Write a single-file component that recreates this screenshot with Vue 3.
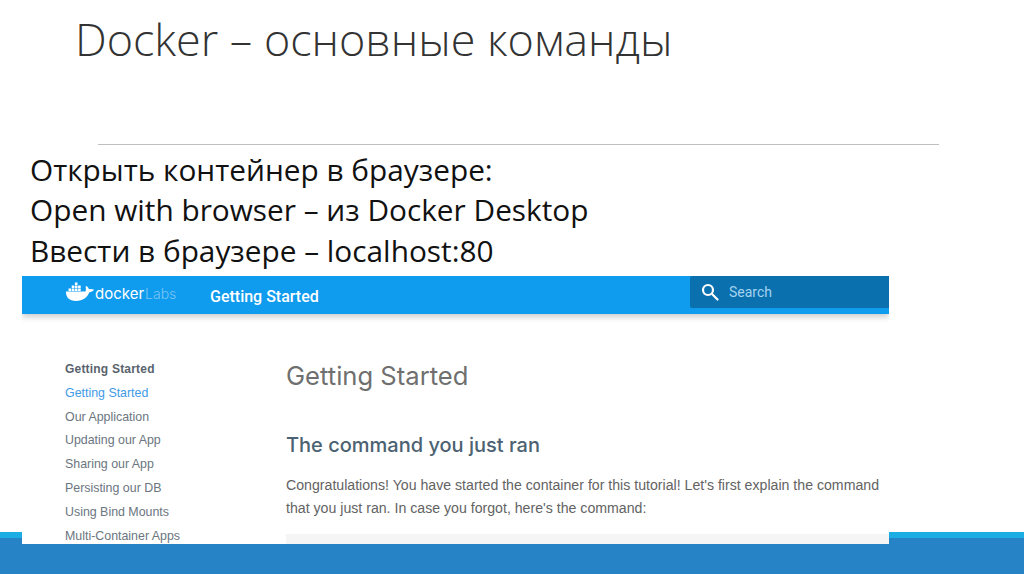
<template>
  <div class="slide">
    <h1 class="title">Docker – основные команды</h1>
    <div class="rule"></div>
    <div class="body">
      <p>Открыть контейнер в браузере:</p>
      <p>Open with browser – из Docker Desktop</p>
      <p>Ввести в браузере – localhost:80</p>
    </div>
    <div class="shot">
      <header class="bar">
        <div class="logo">
          <svg class="whale" width="30" height="20" viewBox="0 0 30 20">
            <path fill="#fff" d="M1 9.500h19.500c.6-2 .5-3.300 0-4.800l1-.700c1.400 1 2.100 2 2.500 3.300 1.500-.6 3-.5 5 .3-1 2-2.700 2.600-4.700 2.700C22.500 15.500 18 19 11 19 4.500 19 .8 15.500 1 9.500z"/>
            <path fill="#fff" d="M3.500 6.500h2.600v2.400H3.500zM6.700 6.500h2.600v2.400H6.700zM9.900 6.500h2.600v2.400H9.900zM13.100 6.500h2.600v2.400h-2.600zM6.700 3.500h2.600v2.400H6.700zM9.900 3.500h2.600v2.400H9.900zM13.100 3.500h2.600v2.400h-2.600zM9.900.5h2.600v2.400H9.900z"/>
          </svg>
          <span class="docker">docker</span><span class="labs">Labs</span>
        </div>
        <div class="bar-title">Getting Started</div>
        <div class="search">
          <svg width="18" height="18" viewBox="0 0 18 18" fill="none" stroke="#fff" stroke-width="2.200">
            <circle cx="7" cy="7" r="5"/>
            <path d="M10.800 10.800L16.500 16.500" stroke-linecap="round"/>
          </svg>
          <span>Search</span>
        </div>
      </header>
      <div class="content">
        <nav class="side">
          <div class="side-head">Getting Started</div>
          <a class="active">Getting Started</a>
          <a>Our Application</a>
          <a>Updating our App</a>
          <a>Sharing our App</a>
          <a>Persisting our DB</a>
          <a>Using Bind Mounts</a>
          <a>Multi-Container Apps</a>
        </nav>
        <main class="doc">
          <h2>Getting Started</h2>
          <h3>The command you just ran</h3>
          <p>Congratulations! You have started the container for this tutorial! Let's first explain the command that you just ran. In case you forgot, here's the command:</p>
          <div class="code"></div>
        </main>
      </div>
    </div>
    <div class="footer"><div class="footer-top"></div></div>
  </div>
</template>

<script setup>
</script>

<style>
html, body { margin: 0; background: #fff; }
</style>

<style scoped>
.slide {
  position: relative;
  width: 1024px;
  height: 574px;
  overflow: hidden;
  background: #fff;
  font-family: "Open Sans", "Noto Sans", sans-serif;
}
.title {
  margin: 0;
  padding: 11px 0 0 75px;
  height: 144px;
  box-sizing: border-box;
  font-size: 44.900px;
  line-height: 56px;
  font-weight: 300;
  color: #333;
}
.rule {
  height: 1px;
  margin: 0 85px 0 98px;
  background: #bfbfbf;
}
.body {
  padding: 5px 0 0 30px;
  color: #111;
  font-size: 29.800px;
  line-height: 40.400px;
}
.body p { margin: 0; }
.shot {
  position: absolute;
  z-index: 2;
  left: 22px;
  top: 276px;
  width: 867px;
  height: 268px;
  overflow: hidden;
  background: #fff;
}
.bar {
  display: flex;
  align-items: flex-start;
  height: 38px;
  background: #0f9bee;
  box-shadow: 0 3px 6px rgba(0, 0, 0, .2);
  color: #fff;
}
.logo {
  display: flex;
  align-items: center;
  width: 188px;
  height: 34px;
  padding-left: 43px;
  box-sizing: border-box;
}
.whale { flex: none; margin-top: -2px; }
.docker { font: 400 15px "Inter", sans-serif; }
.labs { font: 300 14px "Inter", sans-serif; margin-left: 1px; color: #7cc6f4; }
.bar-title {
  font: 500 16px/41px "Roboto", sans-serif;
  flex: 1;
}
.search {
  display: flex;
  align-items: center;
  gap: 10px;
  width: 199px;
  height: 32px;
  padding-left: 11px;
  box-sizing: border-box;
  background: #0a70ae;
  border-radius: 2px 0 0 2px;
  font: 400 14px "Roboto", sans-serif;
  color: #a5d3ee;
}
.content {
  display: flex;
  padding-top: 44px;
}
.side {
  width: 264px;
  padding-left: 43px;
  box-sizing: border-box;
  flex: none;
  font: 400 12.400px/23.800px "Liberation Sans", sans-serif;
  color: #6b7680;
}
.side-head { font-size: 12px; font-weight: 700; color: #59636d; letter-spacing: .2px; }
.side a { display: block; }
.side .active { color: #3f9be8; }
.doc {
  flex: 1;
  min-width: 0;
  padding-top: 3px;
  padding-right: 5px;
}
.doc h2 {
  margin: 0;
  font: 400 25.600px/30px "Inter", sans-serif;
  color: #6f6f6f;
}
.doc h3 {
  margin: 40px 0 0;
  font: 500 20px/28px "Inter", sans-serif;
  color: #4c6272;
}
.doc p {
  margin: 15px 0 0;
  font: 400 14.150px/23px "Liberation Sans", sans-serif;
  color: #636363;
}
.code {
  margin-top: 14px;
  height: 30px;
  background: #f5f5f5;
  margin-right: -5px;
}
.footer {
  position: absolute;
  left: 0;
  right: 0;
  bottom: 0;
  height: 42px;
  background: #2683c6;
  z-index: 1;
}
.footer-top { height: 6px; background: #1cade4; }
</style>
